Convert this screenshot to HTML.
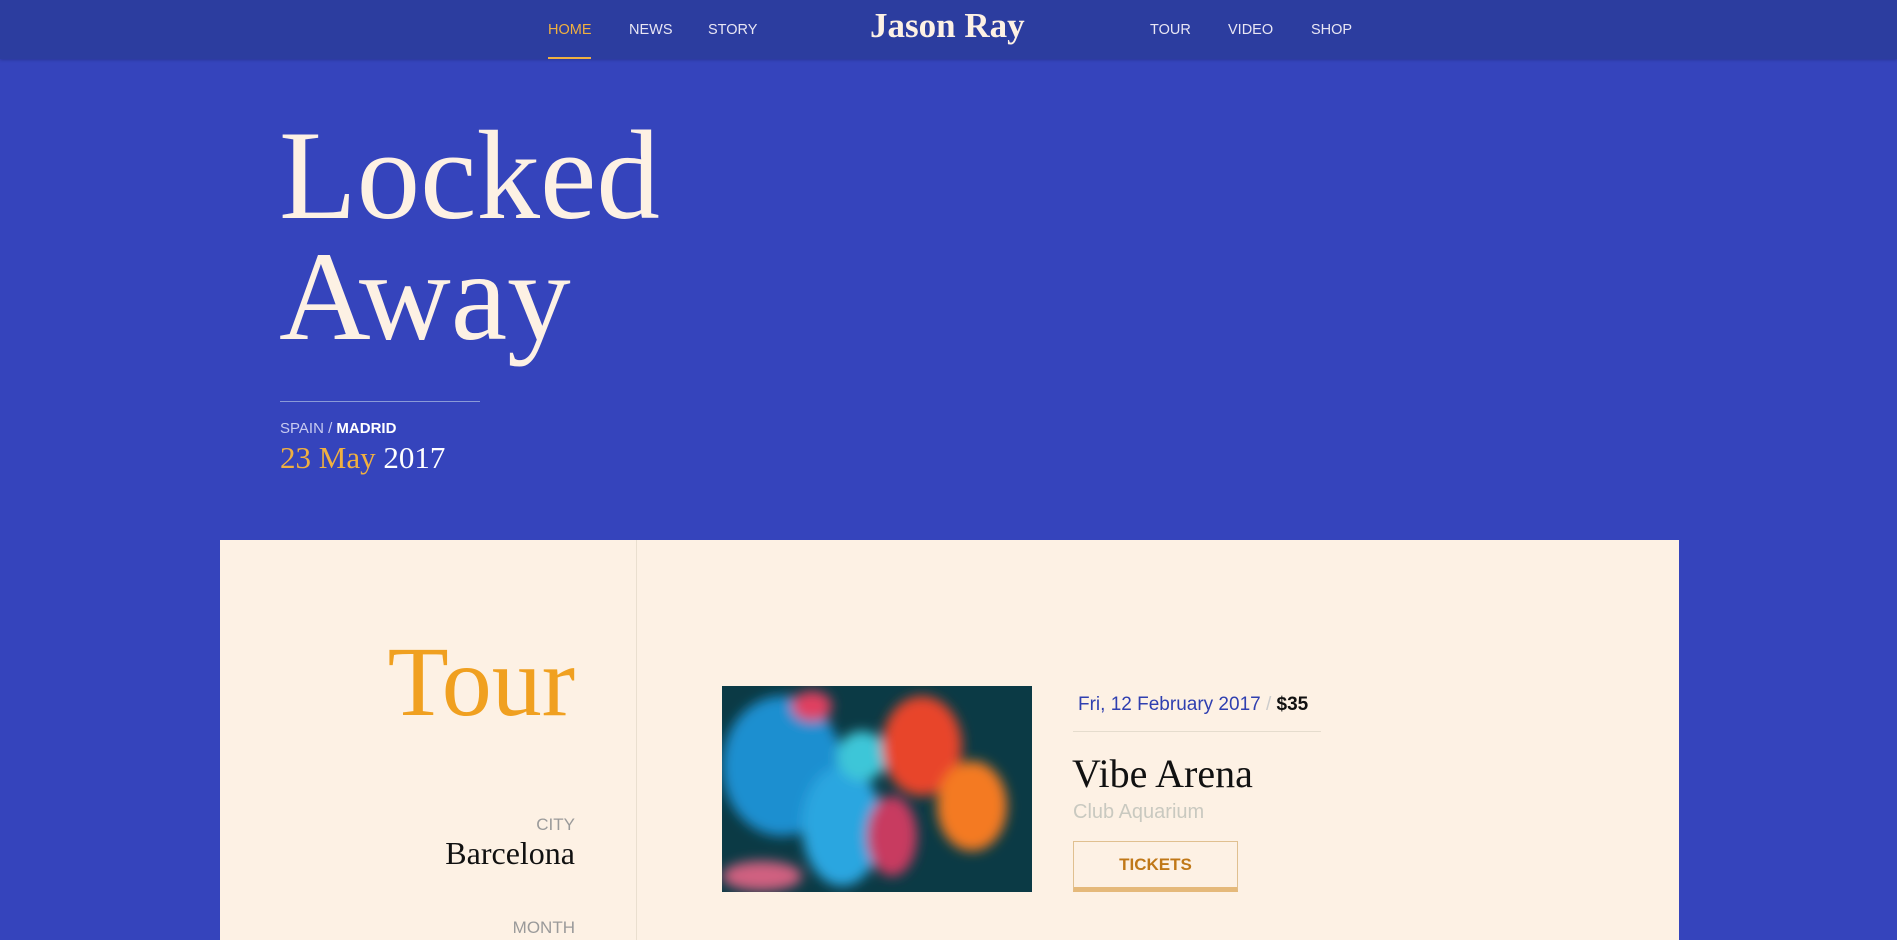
<!DOCTYPE html>
<html><head><meta charset="utf-8"><style>
*{margin:0;padding:0;box-sizing:border-box}
body{width:1897px;height:929px;overflow:hidden;background:#3544bc;font-family:"Liberation Sans",sans-serif;position:relative}
.nav{position:absolute;left:0;top:0;width:1897px;height:59px;background:#2c3d9f;box-shadow:0 1px 3px rgba(0,0,0,.2)}
.nav a{position:absolute;top:22px;font-size:14.5px;color:#e8e6f4;text-decoration:none}
.abs{position:absolute;white-space:nowrap}
.serif{font-family:"Liberation Serif",serif}
</style></head><body>
<div class="nav">
<a style="left:548px;color:#f0b040">HOME</a>
<div class="abs" style="left:548px;top:57px;width:43px;height:2px;background:#f0b040"></div>
<a style="left:629px">NEWS</a>
<a style="left:708px">STORY</a>
<div class="abs serif" style="left:870px;top:6px;font-size:35px;font-weight:bold;color:#fdf1e4">Jason Ray</div>
<a style="left:1150px">TOUR</a>
<a style="left:1228px">VIDEO</a>
<a style="left:1311px">SHOP</a>
</div>
<div class="abs serif" style="left:279px;top:116px;font-size:127px;line-height:121px;color:#fdf1e4">Locked<br>Away</div>
<div class="abs" style="left:280px;top:401px;width:200px;height:1px;background:#8a9ad8"></div>
<div class="abs" style="left:280px;top:420px;font-size:15px;color:#c8cbf0">SPAIN / <b style="color:#fff">MADRID</b></div>
<div class="abs serif" style="left:280px;top:440px;font-size:31px;color:#fff"><span style="color:#f0b040">23 May</span> 2017</div>
<div class="abs" style="left:220px;top:540px;width:1459px;height:400px;background:#fdf1e4"></div>
<div class="abs" style="left:636px;top:540px;width:1px;height:400px;background:#eadfcf"></div>
<div class="abs serif" style="right:1322px;top:624px;font-size:100px;color:#f0a020">Tour</div>
<div class="abs" style="right:1322px;top:815px;font-size:17px;color:#9a9a9a">CITY</div>
<div class="abs serif" style="right:1322px;top:835px;font-size:32px;color:#111">Barcelona</div>
<div class="abs" style="right:1322px;top:918px;font-size:17px;color:#9a9a9a">MONTH</div>
<svg class="abs" style="left:722px;top:686px" width="310" height="206" viewBox="0 0 310 206">
<defs><filter id="b"><feGaussianBlur stdDeviation="6"/></filter></defs>
<rect width="310" height="206" fill="#0b3a45"/>
<g filter="url(#b)">
<ellipse cx="60" cy="80" rx="60" ry="70" fill="#1c8fd0"/>
<ellipse cx="120" cy="140" rx="40" ry="60" fill="#2aa6e0"/>
<ellipse cx="140" cy="70" rx="25" ry="25" fill="#3ec6d8"/>
<ellipse cx="200" cy="60" rx="40" ry="50" fill="#e8452a"/>
<ellipse cx="250" cy="120" rx="35" ry="45" fill="#f47a20"/>
<ellipse cx="170" cy="150" rx="25" ry="40" fill="#c83a60"/>
<ellipse cx="90" cy="20" rx="20" ry="15" fill="#e04060"/>
<ellipse cx="40" cy="190" rx="40" ry="15" fill="#d06080"/>
</g></svg>
<div class="abs" style="left:1078px;top:694px;font-size:19px;color:#2f3fb0">Fri, 12 February 2017 <span style="color:#ccc">/</span> <b style="color:#111">$35</b></div>
<div class="abs" style="left:1073px;top:731px;width:248px;height:1px;background:#e5dccd"></div>
<div class="abs serif" style="left:1072px;top:750px;font-size:40px;color:#111">Vibe Arena</div>
<div class="abs" style="left:1073px;top:801px;font-size:20px;color:#c9c9c0">Club Aquarium</div>
<div class="abs" style="left:1073px;top:841px;width:165px;height:51px;border:1px solid #e0c090;border-bottom:5px solid #e5b97a;font-size:17px;font-weight:bold;color:#c07818;text-align:center;line-height:46px">TICKETS</div>
</body></html>
